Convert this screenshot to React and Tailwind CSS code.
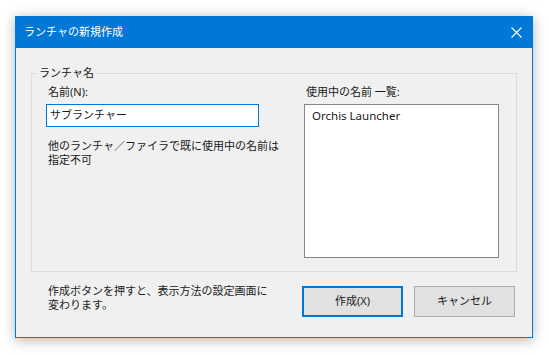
import React from "react";

const font = "font-['Segoe_UI','Noto_Sans','Noto_Sans_CJK_JP',sans-serif]";

const CloseIcon = () => (
  <svg width="11" height="11" viewBox="0 0 11 11" className="block">
    <path d="M0.5 0.5 L10.5 10.5 M10.5 0.5 L0.5 10.5" stroke="#ffffff" strokeWidth="1.1" fill="none" />
  </svg>
);

export default function App() {
  return (
    <div className={`w-[548px] h-[355px] bg-white pt-[16px] pl-[15px] ${font} text-[11px] text-[#1a1a1a]`}>
      <div className="w-[518px] h-[322px] border border-[#0078d7] bg-[#f0f0f0] shadow-[0_2px_12px_rgba(0,0,0,0.3)] flex flex-col">
        {/* title bar */}
        <div className="h-[31px] bg-[#0078d7] flex items-center justify-between pl-[8px] pr-[10px] text-white text-[11px]">
          <span>ランチャの新規作成</span>
          <CloseIcon />
        </div>

        <div className="flex-1 flex flex-col px-[15px]">
          {/* group box */}
          <fieldset className="mt-[17px] border border-[#dcdcdc]">
            <legend className="ml-[5px] px-[2px] leading-[16px]">ランチャ名</legend>
            <div className="flex justify-between pl-[14px] pr-[17px] pb-[13px]">
              <div className="w-[213px] flex flex-col">
                <div className="mt-[3px] pl-[2px] leading-[16px]">名前(N):</div>
                <div className="mt-[4px] h-[23px] border border-[#0078d7] bg-white flex items-center px-[3px]">
                  サブランチャー
                </div>
                <div className="mt-[12px] pl-[2px] leading-[13.5px] whitespace-nowrap">
                  他のランチャ／ファイラで既に使用中の名前は
                  <br />
                  指定不可
                </div>
              </div>
              <div className="w-[195px] flex flex-col">
                <div className="mt-[3px] pl-[2px] leading-[16px]">使用中の名前 一覧:</div>
                <div className="mt-[4px] h-[154px] border border-[#828790] bg-white px-[7px] pt-[3px] leading-[16px] text-[11.5px]">
                  Orchis Launcher
                </div>
              </div>
            </div>
          </fieldset>

          {/* bottom row */}
          <div className="mt-[12px] flex items-start justify-between">
            <div className="ml-[17px] leading-[13.5px] whitespace-nowrap">
              作成ボタンを押すと、表示方法の設定画面に
              <br />
              変わります。
            </div>
            <div className="mt-[2px] mr-[2px] flex gap-[11px]">
              <button className="w-[101px] h-[31px] border-2 border-[#0078d7] bg-[#e1e1e1] text-[11px]">
                作成(X)
              </button>
              <button className="w-[101px] h-[31px] border border-[#adadad] bg-[#e1e1e1] text-[11px]">
                キャンセル
              </button>
            </div>
          </div>
        </div>
      </div>
    </div>
  );
}
